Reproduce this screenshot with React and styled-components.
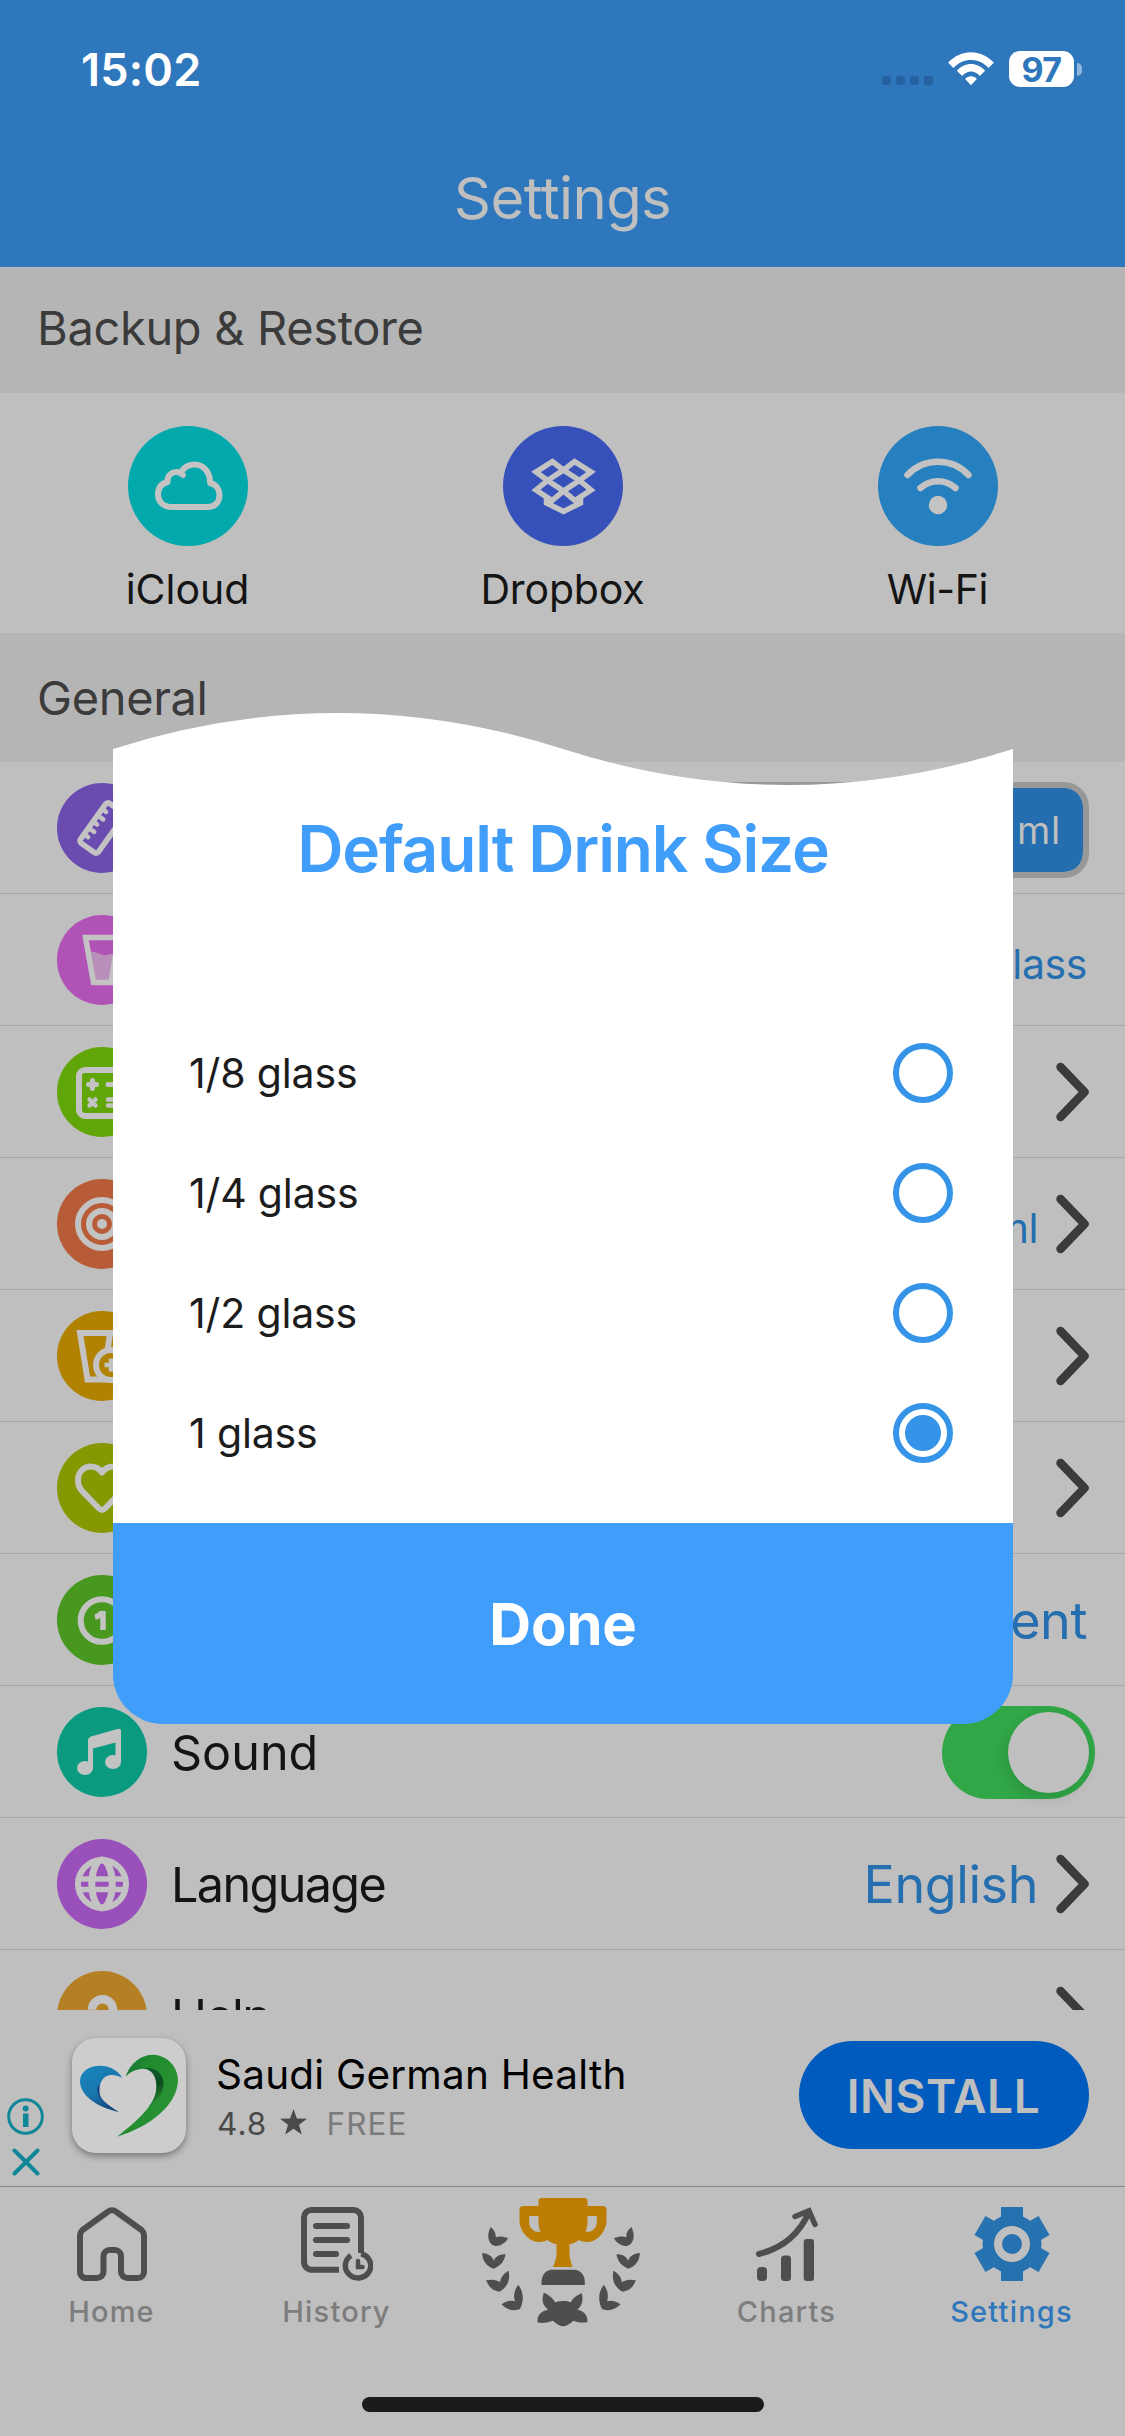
import React from "react";
import styled, { createGlobalStyle } from "styled-components";

const GlobalStyle = createGlobalStyle`
  *, *::before, *::after { box-sizing: border-box; }
  body { margin: 0; background: #bfbfbf; }
`;

const Screen = styled.div`
  position: relative;
  display: flex;
  flex-direction: column;
  width: 1125px;
  height: 2436px;
  overflow: hidden;
  background: #bfbfbf;
  color: #141414;
  font-family: Inter, "Liberation Sans", sans-serif;
  white-space: nowrap;
`;

/* ---------- header ---------- */

const Header = styled.header`
  display: flex;
  flex-direction: column;
  flex: none;
  height: 267px;
  background: #2e77bc;
`;

const StatusBar = styled.div`
  display: flex;
  align-items: center;
  justify-content: space-between;
  height: 138px;
  padding: 0 43px 0 81px;
`;

const Clock = styled.time`
  color: #fff;
  font-size: 45px;
  font-weight: 600;
  letter-spacing: 0.2px;
`;

const StatusIcons = styled.div`
  display: flex;
  align-items: center;
`;

const SignalDots = styled.div`
  display: flex;
  gap: 5px;
  margin: 23px 15px 0 0;
`;

const SignalDot = styled.i`
  width: 9px;
  height: 9px;
  border-radius: 3px;
  background: #2561a0;
`;

const Battery = styled.div`
  display: flex;
  align-items: center;
  justify-content: center;
  width: 65px;
  height: 36px;
  margin-left: 15px;
  border-radius: 11px;
  background: #fff;
  color: #2e77bc;
  font-size: 34px;
  font-weight: 700;
  letter-spacing: -0.5px;
`;

const BatteryNub = styled.i`
  width: 5px;
  height: 13px;
  margin-left: 3px;
  border-radius: 0 6px 6px 0;
  background: #8fb6dc;
`;

const PageTitle = styled.h1`
  margin: 0;
  color: #bfbfbf;
  font-size: 58px;
  font-weight: 400;
  line-height: 121px;
  letter-spacing: -0.6px;
  text-align: center;
`;

/* ---------- sections ---------- */

const SectionTitle = styled.h2`
  flex: none;
  height: ${(p) => p.$height}px;
  margin: 0;
  padding-left: 37px;
  background: #b5b5b5;
  color: #3b3b3b;
  font-size: 47px;
  font-weight: 400;
  line-height: ${(p) => p.$line}px;
  letter-spacing: -0.35px;
`;

const BackupPanel = styled.div`
  display: grid;
  grid-template-columns: repeat(3, 1fr);
  flex: none;
  height: 240px;
  padding-top: 33px;
`;

const BackupItem = styled.div`
  display: flex;
  flex-direction: column;
  align-items: center;
`;

const BackupLabel = styled.span`
  color: #141414;
  font-size: 41px;
  line-height: 87px;
  letter-spacing: ${(p) => p.$tracking || 0}px;
`;

const Disc = styled.div`
  flex: none;
  width: ${(p) => p.$size}px;
  height: ${(p) => p.$size}px;
  border-radius: 50%;
  background: ${(p) => p.$color};

  svg { display: block; width: 100%; height: 100%; }
`;

const SettingsList = styled.div`
  flex: none;
  height: 1248px;
  overflow: hidden;
`;

const Row = styled.div`
  display: flex;
  align-items: center;
  height: 132px;
  padding: 1px 36px 0 57px;
  border-bottom: 1px solid #a6a6a6;
`;

const RowLabel = styled.span`
  margin-left: 24px;
  font-size: 48.5px;
  letter-spacing: ${(p) => p.$tracking || 0}px;
`;

const RowEnd = styled.div`
  display: flex;
  align-items: center;
  gap: 20px;
  margin-left: auto;
`;

const Value = styled.span`
  margin-right: ${(p) => (p.$beforeChevron ? -2 : 2)}px;
  color: #256eaf;
  font-size: ${(p) => (p.$small ? 41 : 52)}px;
  letter-spacing: -0.4px;
  padding-top: ${(p) => (p.$small ? 7 : 0)}px;
`;

const Segmented = styled.div`
  display: flex;
  justify-content: flex-end;
  width: 380px;
  height: 96px;
  margin-top: 4px;
  border: 6px solid #989898;
  border-radius: 25px;
  overflow: hidden;
`;

const Segment = styled.span`
  width: 130px;
  padding-right: 22px;
  border-radius: 0 18px 18px 0;
  background: #246dae;
  color: #bfbfbf;
  font-size: 38px;
  line-height: 84px;
  letter-spacing: 0.7px;
  text-align: right;
`;

const Toggle = styled.div`
  display: flex;
  justify-content: flex-end;
  width: 153px;
  height: 93px;
  margin-right: -6px;
  padding: 6px;
  border-radius: 47px;
  background: #31a747;
`;

const Knob = styled.i`
  width: 81px;
  height: 81px;
  border-radius: 50%;
  background: #bfbfbf;
  box-shadow: -2px 5px 14px rgba(0, 0, 0, 0.12);
`;

/* ---------- advert ---------- */

const Advert = styled.aside`
  display: flex;
  align-items: center;
  flex: none;
  height: 176px;
  padding: 0 36px 6px 7px;
`;

const AdMarks = styled.div`
  display: flex;
  flex-direction: column;
  align-items: center;
  align-self: flex-start;
  gap: 13px;
  width: 37px;
  padding-top: 88px;
  svg { display: block; }
`;

const AppIcon = styled.div`
  width: 114px;
  height: 115px;
  margin-left: 28px;
  border-radius: 24px;
  background: #cdcdcd;
  box-shadow: 0 3px 7px rgba(0, 0, 0, 0.38);
  svg { display: block; }
`;

const AdText = styled.div`
  display: flex;
  flex-direction: column;
  margin: 6px 0 0 30px;
`;

const AdName = styled.strong`
  color: #000;
  font-size: 40.5px;
  font-weight: 400;
  line-height: 50px;
  letter-spacing: 0.22px;
`;

const AdMeta = styled.div`
  display: flex;
  align-items: center;
  height: 47px;
  padding-left: 1px;
  color: #4a4a4a;
  font-size: 31.5px;
  letter-spacing: 1.1px;
  svg { margin: 0 19px 2px 13px; }
`;

const AdPrice = styled.span`
  color: #7b7b7b;
`;

const InstallButton = styled.button`
  width: 290px;
  height: 108px;
  margin-left: auto;
  padding: 1px 1px 0 0;
  border: 0;
  border-radius: 54px;
  background: #005bbf;
  color: #bfbfbf;
  font-family: inherit;
  font-size: 46px;
  font-weight: 600;
  letter-spacing: 0.6px;
`;

/* ---------- tab bar ---------- */

const TabBar = styled.nav`
  display: grid;
  grid-template-columns: repeat(5, 1fr);
  flex: none;
  height: 211px;
  border-top: 1px solid #868686;
`;

const Tab = styled.div`
  display: flex;
  flex-direction: column;
  align-items: center;
  padding: ${(p) => (p.$tall ? 11 : 20)}px 2px 0 0;
  svg { display: block; flex: none; }
`;

const TabLabel = styled.span`
  color: ${(p) => (p.$active ? "#2e77bc" : "#7d7d7d")};
  font-size: 29px;
  font-weight: 500;
  line-height: 62px;
  letter-spacing: 1.2px;
`;

const HomeIndicator = styled.div`
  flex: none;
  align-self: center;
  width: 402px;
  height: 15px;
  border-radius: 8px;
  background: #1b1b1b;
`;

/* ---------- dialog ---------- */

const Dialog = styled.section`
  position: absolute;
  top: 713px;
  left: 113px;
  display: flex;
  flex-direction: column;
  width: 900px;
  height: 1011px;
  svg { display: block; flex: none; }
`;

const DialogBody = styled.div`
  flex: 1;
  background: #fff;
`;

const DialogTitle = styled.h3`
  margin: 0 0 100px;
  color: #409dfa;
  font-size: 64px;
  font-weight: 600;
  line-height: 128px;
  letter-spacing: -1.15px;
  text-align: center;
`;

const Option = styled.label`
  display: flex;
  align-items: center;
  justify-content: space-between;
  height: 120px;
  padding: 0 60px 0 76px;
  color: #1c1c1c;
  font-size: 41px;
  letter-spacing: -0.15px;
`;

const Radio = styled.i`
  display: flex;
  align-items: center;
  justify-content: center;
  width: 60px;
  height: 60px;
  border: 6px solid #3594e8;
  border-radius: 50%;

  &::after {
    content: "";
    width: 36px;
    height: 36px;
    border-radius: 50%;
    background: ${(p) => (p.$checked ? "#3594e8" : "transparent")};
  }
`;

const DoneButton = styled.button`
  flex: none;
  height: 201px;
  padding: 0;
  border: 0;
  border-radius: 0 0 50px 50px;
  background: #409dfa;
  color: #fff;
  font-family: inherit;
  font-size: 58px;
  font-weight: 700;
  letter-spacing: -0.2px;
`;

/* ---------- icons ---------- */

const light = "#c3c3c3";

const WifiStatus = () => (
  <svg width="46" height="34" viewBox="0 0 137 102">
    <g fill="#fff">
      <path d="M0 32 C38 -10 99 -10 137 32 L121 48 C92 16 45 16 16 48 Z" />
      <path d="M26 56 C49 29 88 29 111 56 L95 72 C81 54 56 54 42 72 Z" />
      <path d="M51 81 C60 70 77 70 86 81 L68.5 100 Z" />
    </g>
  </svg>
);

const Chevron = () => (
  <svg width="33" height="60" viewBox="0 0 33 60">
    <path d="M4.500 5 L28.500 30 L4.500 55" fill="none" stroke="#3b3b3b" strokeWidth="8.500" strokeLinecap="round" strokeLinejoin="round" />
  </svg>
);

const CloudIcon = () => (
  <svg viewBox="0 0 120 120" fill="none" stroke={light} strokeWidth="6" strokeLinecap="round" strokeLinejoin="round">
    <path d="M43 81 C35 81 30 75 30 68.500 C30 62 33.500 57.500 39.500 56 C39 48.500 46 44 52.500 47 C55.500 41.500 60.500 38.500 66.500 38.500 C76 38.500 82.500 47 82 57 C88.500 58.500 91.500 63.500 91.500 69 C91.500 76 87 81 80 81 Z" />
    <path d="M52.500 47 L55 49" />
  </svg>
);

const DropboxIcon = () => (
  <svg viewBox="0 0 120 120" fill="none" stroke={light} strokeWidth="5.500" strokeLinejoin="miter">
    <path d="M49.500 35.500 L33 46 L44.500 54.500 L60.500 44 Z" />
    <path d="M71.500 35.500 L88 46 L76.500 54.500 L60.500 44 Z" />
    <path d="M44.500 54.500 L33 64 L49 74.500 L60.500 65 Z" />
    <path d="M76.500 54.500 L88 64 L72 74.500 L60.500 65 Z" />
    <path d="M43.500 70 V77 L60.500 85.500 L77.500 77 V70" />
  </svg>
);

const WifiIcon = () => (
  <svg viewBox="0 0 120 120" fill="none" stroke={light} strokeWidth="6.500" strokeLinecap="round">
    <path d="M29.500 49 A42 42 0 0 1 90.500 49" />
    <path d="M42.500 62 A26 26 0 0 1 77.500 62" />
    <circle cx="60" cy="79" r="9.200" fill={light} stroke="none" />
  </svg>
);

const RulerIcon = () => (
  <svg viewBox="0 0 90 90" fill="none" stroke={light} strokeWidth="5.500" strokeLinecap="round">
    <g transform="translate(45 45) rotate(-54.500)">
      <rect x="-24.500" y="-11" width="49" height="22" rx="3" />
      <path strokeWidth="4.500" d="M-15.500 -10 V-6 M-7.700 -10 V-4 M0 -10 V-6 M7.700 -10 V-4 M15.500 -10 V-6" />
    </g>
  </svg>
);

const GlassIcon = () => (
  <svg viewBox="0 0 90 90">
    <path d="M32 37 C40 36 44 41 50 40 C54 39 56 38 60 38 L55 66 H36.500 Z" fill="#b98fb9" />
    <path d="M28.500 22.500 H61.500 L54 67.500 H36.500 Z" fill="none" stroke={light} strokeWidth="5.500" />
  </svg>
);

const CalculatorIcon = () => (
  <svg viewBox="0 0 90 90" fill="none" stroke={light} strokeWidth="5" strokeLinecap="round">
    <rect x="22" y="23" width="46" height="46" rx="6" strokeWidth="6" />
    <path d="M31.500 37.500 h8 M35.500 33.500 v8 M51 37.500 h8" />
    <path d="M32.500 52.500 l6 6 M38.500 52.500 l-6 6 M51 52.500 h8 M51 58.500 h8" strokeWidth="4.500" />
  </svg>
);

const TargetIcon = () => (
  <svg viewBox="0 0 90 90" fill="none" stroke={light} strokeWidth="6">
    <circle cx="45" cy="45" r="24" />
    <circle cx="45" cy="45" r="13" />
    <circle cx="45" cy="45" r="5" fill={light} stroke="none" />
  </svg>
);

const GlassPlusIcon = () => (
  <svg viewBox="0 0 90 90" fill="none" stroke={light} strokeWidth="6">
    <path d="M50 68.500 H30.500 L23 22 H62" />
    <path d="M53 22 L50.500 40" />
    <circle cx="54" cy="54" r="15" />
    <path d="M54 47.500 V60.500 M47.500 54 H60.500" strokeWidth="4.500" />
  </svg>
);

const HeartIcon = () => (
  <svg viewBox="0 0 90 90" fill="none" stroke={light} strokeWidth="6" strokeLinejoin="round">
    <path d="M45 67 C43.500 67 42.500 66 41.500 65 L25.500 48.500 C21.500 44.500 21 40.500 21 37 C21 29 27 23.500 33.500 23.500 C38.500 23.500 42.500 26 45 29.500 C47.500 26 51.500 23.500 56.500 23.500 C63 23.500 69 29 69 37 C69 40.500 68.500 44.500 64.500 48.500 L48.500 65 C47.500 66 46.500 67 45 67 Z" />
  </svg>
);

const BadgeIcon = () => (
  <svg viewBox="0 0 90 90" fill="none" stroke={light}>
    <circle cx="45" cy="45.500" r="21.300" strokeWidth="6" />
    <path d="M38 42 C42 41.500 44 39.500 45 37 M46 36 V55" strokeWidth="5.500" />
  </svg>
);

const MusicIcon = () => (
  <svg viewBox="0 0 90 90" fill={light}>
    <path d="M31 33.500 Q31 30.500 34 29.500 L60.500 22 Q64 21.200 64 24.500 V55 H58.500 V35.500 L36 41.500 V61 H31 Z" />
    <ellipse cx="28" cy="61" rx="8" ry="7" />
    <ellipse cx="56" cy="55" rx="8" ry="7" />
    <path d="M31 54 h5 v8 h-5 Z M58 48 h6 v8 h-6 Z" />
  </svg>
);

const GlobeIcon = () => (
  <svg viewBox="0 0 90 90" fill="none" stroke={light} strokeWidth="6">
    <circle cx="45" cy="45" r="24" />
    <ellipse cx="45" cy="45" rx="10.200" ry="24" strokeWidth="7" />
    <path d="M23 40 H67 M23 50.500 H67" strokeWidth="5.500" />
  </svg>
);

const HelpIcon = () => (
  <svg viewBox="0 0 90 90" fill="none" stroke={light} strokeWidth="8.500">
    <path d="M35 38.700 A10.500 10.500 0 0 1 56 38.700 C56 45 45 47 45 56" />
  </svg>
);

const InfoMark = () => (
  <svg width="37" height="37" viewBox="0 0 37 37">
    <circle cx="18.500" cy="18.500" r="16.800" fill="none" stroke="#0f8798" strokeWidth="3" />
    <circle cx="18.700" cy="10.500" r="3" fill="#0f8798" />
    <rect x="16" y="15.500" width="5.500" height="13.500" fill="#0f8798" />
  </svg>
);

const CloseMark = () => (
  <svg width="28" height="28" viewBox="0 0 28 28">
    <path d="M2.500 2.500 L25.500 25.500 M25.500 2.500 L2.500 25.500" stroke="#0f8798" strokeWidth="4" strokeLinecap="round" />
  </svg>
);

const HealthLogo = () => (
  <svg width="114" height="115" viewBox="0 0 114 115">
    <defs>
      <linearGradient id="leaf" x1="0" y1="0" x2="1" y2="0.6">
        <stop offset="0" stopColor="#0f6a3c" />
        <stop offset="0.4" stopColor="#1f8a2e" />
        <stop offset="1" stopColor="#2c9434" />
      </linearGradient>
      <linearGradient id="fold" x1="0" y1="0" x2="0.3" y2="1">
        <stop offset="0" stopColor="#0d6038" />
        <stop offset="0.6" stopColor="#0b4d1c" />
        <stop offset="1" stopColor="#2a8a32" />
      </linearGradient>
      <linearGradient id="wing" x1="0" y1="0" x2="0.6" y2="1">
        <stop offset="0" stopColor="#1488bd" />
        <stop offset="0.6" stopColor="#1b76ae" />
        <stop offset="1" stopColor="#12467f" />
      </linearGradient>
    </defs>
    <path d="M54 38.500 C57 27 68 17 80.500 16.700 C95 17 106 28 106 43 C105 66 80 88 45 98.700 C64 84 83 68 84.500 50 C85 37 78 29 69 31 C62 32 58 34 54 38.500 Z" fill="url(#leaf)" />
    <path d="M69 31 C78 29 85 37 84.500 50 C84 57 81 64 76 70 C86 62 92 54 91.500 45 C91 35 82 27 69 31 Z" fill="url(#fold)" />
    <path d="M50 39.700 C46 32 37 27.500 27 27.700 C15 28.500 8 35 8 43 C8 57 24 69 47 74 C34 66 27 61 27.300 53 C27.500 44 31 38.500 38 37 C43 36.500 46 38 50 39.700 Z" fill="url(#wing)" />
    <path d="M27.300 46 C22 53 27 64 47 74 C34 66 27 61 27.300 53 Z" fill="#173f7c" />
  </svg>
);

const StarIcon = () => (
  <svg width="27" height="26" viewBox="0 0 27 26">
    <path d="M13.500 0 L16.900 9.400 L27 9.700 L19 15.700 L21.800 25.500 L13.500 19.800 L5.200 25.500 L8 15.700 L0 9.700 L10.100 9.400 Z" fill="#4a4a4a" />
  </svg>
);

const dark = "#4e4e4e";

const HomeIcon = () => (
  <svg width="70" height="74" viewBox="0 0 70 74" fill="none" stroke={dark} strokeWidth="6" strokeLinejoin="round">
    <path d="M10 71 H20 A6.500 6.500 0 0 0 26.500 64.500 V49 A6 6 0 0 1 32.500 43 H38 A6 6 0 0 1 44 49 V64.500 A6.500 6.500 0 0 0 50.500 71 H61 A6 6 0 0 0 67 65 V29 Q67 25.500 64.500 23 L39.500 5 Q35 1.500 30.500 5 L5.500 23 Q3 25.500 3 29 V65 A6 6 0 0 0 10 71 Z" />
  </svg>
);

const HistoryIcon = () => (
  <svg width="72" height="74" viewBox="0 0 72 74" fill="none" stroke={dark} strokeWidth="6">
    <path d="M38 62.800 H11 A8 8 0 0 1 3 55 V10.500 A7.500 7.500 0 0 1 10.500 3 H52.500 A7.500 7.500 0 0 1 60 10.500 V46" />
    <path d="M15 19 H46 M15 33 H46 M15 47 H35" strokeLinecap="round" />
    <path d="M50 48.500 A12.700 12.200 0 1 0 60 46.800" strokeWidth="5.500" />
    <path d="M57 54 V60 H61.500" strokeWidth="4.500" strokeLinecap="round" />
  </svg>
);

const Leaves = () => (
  <g fill="#4e4e4e">
    <path d="M66 126 C76 133 82 143 82 157 C91 153 104 154 119 160 C111 173 99 182 84 183 C64 183 51 158 66 126 Z" />
    <path d="M41 204 C59 206 71 213 76 227 C82 214 93 208 111 208 C108 229 95 244 76 251 C55 244 42 229 41 204 Z" />
    <path d="M120 257 C126 281 119 306 93 320 C75 318 60 307 53 286 C70 282 85 284 95 292 C96 277 106 265 120 257 Z" />
    <path d="M149 299 C165 320 168 347 154 373 C134 379 113 374 99 358 C113 348 127 345 139 349 C134 331 138 314 149 299 Z" />
  </g>
);

const TrophyIcon = () => (
  <svg width="190" height="147" viewBox="-4.500 39 570 441">
    <Leaves />
    <g transform="translate(555 0) scale(-1 1)"><Leaves /></g>
    <path fill="#bb7d04" fillRule="evenodd" d="M220 39 H347 Q357 39 357 49 V63 H402 Q414 63 414 75 V106 C414 140 385 172 356 171 C346 171 338 168 331 165 C323 171 313 176 303 178 V205 C303 219 307 232 312 246 H253 C260 232 264 219 264 205 V178 C254 176 245 171 237 165 C230 169 222 171 212 171 C183 172 153 140 153 106 V75 Q153 63 165 63 H210 V49 Q210 39 220 39 Z M182 93 V110 C182 130 197 143 216 140 C212 131 210 121 210 110 V93 Z M357 93 V110 C357 121 355 131 351 140 C370 143 385 130 385 110 V93 Z" />
    <path fill="#4e4e4e" d="M219 300 V291 C219 272 231 256 247 254 H320 C337 256 349 272 349 291 V300 Z" />
    <path fill="#4e4e4e" d="M226 323 C241 329 255 341 260 352 C275 347 293 347 307 352 C312 341 324 331 340 325 C345 345 341 362 327 374 C343 377 358 388 357 411 C343 415 328 412 314 407 C307 415 296 422 284 424 C271 422 261 415 254 407 C240 412 222 416 207 412 C205 389 220 377 239 374 C223 361 218 345 226 323 Z" />
  </svg>
);

const ChartsIcon = () => (
  <svg width="62" height="74" viewBox="0 0 62 74">
    <g fill={dark}>
      <rect x="1" y="60" width="10" height="14" rx="4" />
      <rect x="25" y="48.500" width="10" height="25.500" rx="3.500" />
      <rect x="47.700" y="32" width="10.300" height="42" rx="3" />
    </g>
    <path d="M3 47 C27 41 43 28 53 5" fill="none" stroke={dark} strokeWidth="6" strokeLinecap="round" />
    <path d="M39 9.500 L53 3.800 L59 17.500" fill="none" stroke={dark} strokeWidth="5.500" strokeLinecap="round" />
  </svg>
);

const GearIcon = () => (
  <svg width="76" height="74" viewBox="-38 -37 76 74">
    <g fill="#2671b0">
      <circle r="29.500" />
      {[0, 60, 120].map((angle) => (
        <rect key={angle} x="-11" y="-37" width="22" height="74" transform={`rotate(${angle})`} />
      ))}
    </g>
    <circle r="14" fill="none" stroke="#bfbfbf" strokeWidth="8" />
  </svg>
);

/* ---------- data ---------- */

const backups = [
  { label: "iCloud", color: "#02a9ac", icon: <CloudIcon /> },
  { label: "Dropbox", color: "#3751bb", icon: <DropboxIcon />, tracking: -0.15 },
  { label: "Wi-Fi", color: "#2680bf", icon: <WifiIcon />, tracking: -0.4 },
];

const rows = [
  { color: "#6a4cb1", icon: <RulerIcon />, segment: "ml" },
  { color: "#b052b6", icon: <GlassIcon />, value: "1 glass", small: true },
  { color: "#61a609", icon: <CalculatorIcon />, chevron: true },
  { color: "#b85c37", icon: <TargetIcon />, value: "2000 ml", small: true, chevron: true },
  { color: "#b08200", icon: <GlassPlusIcon />, chevron: true },
  { color: "#869800", icon: <HeartIcon />, chevron: true },
  { color: "#48981f", icon: <BadgeIcon />, value: "Percent" },
  { color: "#0a9a7f", icon: <MusicIcon />, label: "Sound", toggle: true },
  { color: "#9a50ba", icon: <GlobeIcon />, label: "Language", tracking: -1.6, value: "English", chevron: true },
  { color: "#b57f24", icon: <HelpIcon />, label: "Help", tracking: -1.6, chevron: true },
];

const sizes = ["1/8 glass", "1/4 glass", "1/2 glass", "1 glass"];

export default function App() {
  return (
    <Screen>
      <GlobalStyle />
      <Header>
        <StatusBar>
          <Clock>15:02</Clock>
          <StatusIcons>
            <SignalDots>
              <SignalDot /><SignalDot /><SignalDot /><SignalDot />
            </SignalDots>
            <WifiStatus />
            <Battery>97</Battery>
            <BatteryNub />
          </StatusIcons>
        </StatusBar>
        <PageTitle>Settings</PageTitle>
      </Header>

      <SectionTitle $height={126} $line={122}>Backup &amp; Restore</SectionTitle>
      <BackupPanel>
        {backups.map((b) => (
          <BackupItem key={b.label}>
            <Disc $size={120} $color={b.color}>{b.icon}</Disc>
            <BackupLabel $tracking={b.tracking}>{b.label}</BackupLabel>
          </BackupItem>
        ))}
      </BackupPanel>

      <SectionTitle $height={129} $line={129}>General</SectionTitle>
      <SettingsList>
        {rows.map((r) => (
          <Row key={r.color}>
            <Disc $size={90} $color={r.color}>{r.icon}</Disc>
            {r.label && <RowLabel $tracking={r.tracking}>{r.label}</RowLabel>}
            <RowEnd>
              {r.segment && <Segmented><Segment>{r.segment}</Segment></Segmented>}
              {r.value && <Value $small={r.small} $beforeChevron={r.chevron}>{r.value}</Value>}
              {r.toggle && <Toggle><Knob /></Toggle>}
              {r.chevron && <Chevron />}
            </RowEnd>
          </Row>
        ))}
      </SettingsList>

      <Advert>
        <AdMarks><InfoMark /><CloseMark /></AdMarks>
        <AppIcon><HealthLogo /></AppIcon>
        <AdText>
          <AdName>Saudi German Health</AdName>
          <AdMeta>4.8<StarIcon /><AdPrice>FREE</AdPrice></AdMeta>
        </AdText>
        <InstallButton>INSTALL</InstallButton>
      </Advert>

      <TabBar>
        <Tab><HomeIcon /><TabLabel>Home</TabLabel></Tab>
        <Tab><HistoryIcon /><TabLabel>History</TabLabel></Tab>
        <Tab $tall><TrophyIcon /></Tab>
        <Tab><ChartsIcon /><TabLabel>Charts</TabLabel></Tab>
        <Tab><GearIcon /><TabLabel $active>Settings</TabLabel></Tab>
      </TabBar>
      <HomeIndicator />

      <Dialog>
        <svg width="900" height="72" viewBox="0 0 900 72">
          <path d="M0 36 Q225 -36 450 36 T900 36 V73 H0 Z" fill="#fff" />
        </svg>
        <DialogBody>
          <DialogTitle>Default Drink Size</DialogTitle>
          {sizes.map((s) => (
            <Option key={s}>
              {s}
              <Radio $checked={s === "1 glass"} />
            </Option>
          ))}
        </DialogBody>
        <DoneButton>Done</DoneButton>
      </Dialog>
    </Screen>
  );
}
